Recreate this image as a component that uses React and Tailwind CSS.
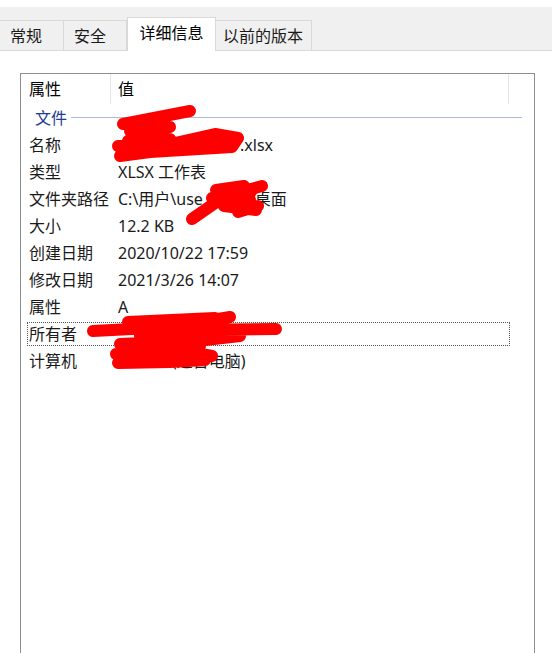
import React from 'react';

const font = { fontFamily: '"Noto Sans", "Noto Sans CJK SC", sans-serif' };

const rows = [
    { label: '名称', value: <span className="pl-[122px]">.xlsx</span> },
    { label: '类型', value: 'XLSX 工作表' },
    { label: '文件夹路径', value: <span>C:\用户\use<span className="pl-[46px]">\桌面</span></span> },
    { label: '大小', value: '12.2 KB' },
    { label: '创建日期', value: '2020/10/22 17:59' },
    { label: '修改日期', value: '2021/3/26 14:07' },
    { label: '属性', value: 'A' },
    { label: '所有者', value: '', focused: true },
    { label: '计算机', value: <span className="pl-[54px]">(这台电脑)</span> },
];

const Tab = ({ label, width, pad, active }) => (
    <div
        className={
            active
                ? 'h-[34px] -mb-px bg-white border border-b-0 border-[#d9d9d9] flex items-start justify-center pt-[3px] text-[16px] text-black relative z-10'
                : 'h-[30px] bg-[#f0f0f0] border border-b-0 border-l-0 border-[#d9d9d9] flex items-center text-[16px] text-[#1a1a1a]'
        }
        style={{ width, paddingLeft: pad }}
    >
        {label}
    </div>
);

// red marker strokes that hide personal info, page coordinates
const scribbles = [
    'M123 124 L190 111 M130 131 L170 127 M152 127 L128 141 L170 139 M118 146 L175 143 L215 134 L238 138 L232 147 L150 152 L120 156 M180 145 L230 142',
    'M192 219 L225 196 L262 186 M212 198 L252 190 L238 212 L258 206 M216 190 L244 186 M224 206 L256 210 M230 196 L248 204 M222 202 L250 200',
    'M93 331 L170 327 L230 317 M128 322 L215 318 M150 330 L276 329 M120 344 L205 340 L240 336 M116 354 L180 350 L212 356 M118 363 L170 362 L205 360 M140 336 L190 335 M130 350 L200 346',
];

const App = () => {
    return (
        <div className="w-[552px] h-[653px] overflow-hidden bg-white relative" style={font}>
            <div className="h-[7px] bg-white" />
            <div className="h-[44px] bg-[#f0f0f0] border-b border-[#d9d9d9] flex items-end">
                <Tab label="常规" width={64} pad={10} />
                <Tab label="安全" width={63} pad={10} />
                <Tab label="详细信息" width={89} active />
                <Tab label="以前的版本" width={96} pad={7} />
            </div>

            <div className="pl-[20px] pt-[22px]">
                <div className="w-[515px] h-[620px] border border-[#8c8e91] bg-white">
                    <div className="h-[30px] flex items-center text-[16px] text-black">
                        <div className="w-[90px] h-full pl-[8px] flex items-center border-r border-[#e5e5e5]">属性</div>
                        <div className="w-[398px] h-full pl-[7px] flex items-center border-r border-[#e5e5e5]">值</div>
                    </div>
                    <div className="h-[27px] flex items-center pl-[14px] pr-[12px] gap-[4px]">
                        <span className="text-[16px] text-[#1e3c96]">文件</span>
                        <div className="flex-1 h-px bg-[#a9bce0]" />
                    </div>
                    {rows.map((r) => (
                        <div key={r.label} className="h-[27px] flex items-center text-[16px] text-[#1a1a1a] pl-[6px] pr-[24px]">
                            <div
                                className={
                                    r.focused
                                        ? 'flex-1 h-[24px] flex items-center border border-dotted border-[#555]'
                                        : 'flex-1 h-[24px] flex items-center border border-transparent'
                                }
                            >
                                <span className="w-[90px] pl-[1px] whitespace-nowrap">{r.label}</span>
                                <span className="whitespace-nowrap">{r.value}</span>
                            </div>
                        </div>
                    ))}
                </div>
            </div>

            <svg className="absolute left-0 top-0 pointer-events-none" width="552" height="653" viewBox="0 0 552 653">
                {scribbles.map((d, i) => (
                    <path key={i} d={d} fill="none" stroke="#ff0000" strokeWidth="12" strokeLinecap="round" strokeLinejoin="round" />
                ))}
            </svg>
        </div>
    );
};

export default App;
